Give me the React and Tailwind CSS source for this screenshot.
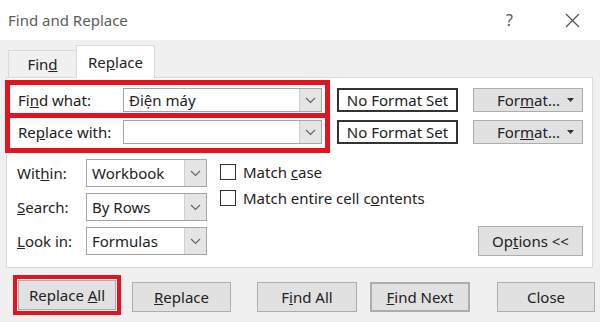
import React from 'react';

function Chevron() {
    return (
        <svg width="11" height="7" viewBox="0 0 11 7">
            <path d="M1 1l4.5 4.5L10 1" fill="none" stroke="#666" strokeWidth="1.2" />
        </svg>
    );
}

function Combo({ value, className }) {
    return (
        <div className={`flex border border-[#a5a5a5] bg-white ${className}`}>
            <div className="flex-1 flex items-center pl-[5px] text-[15px] text-[#222]">{value}</div>
            <div className="w-[22px] bg-[#e5e5e5] border-l border-[#cfcfcf] flex items-center justify-center">
                <Chevron />
            </div>
        </div>
    );
}

function Btn({ children, className }) {
    return (
        <div className={`h-[30px] flex items-center justify-center bg-[#e1e1e1] border border-[#adadad] text-[15px] text-[#222] ${className}`}>
            <span>{children}</span>
        </div>
    );
}

export default function App() {
    return (
        <div className="w-[600px] h-[322px] overflow-hidden font-['Noto_Sans',sans-serif] bg-[#f0f0f0]">
            {/* Title bar */}
            <div className="h-[40px] bg-white flex items-center">
                <span className="ml-[8px] text-[15px] text-[#5c5c5c]">Find and Replace</span>
                <span className="ml-auto mr-[52px] text-[16px] text-[#555]">?</span>
                <svg className="mr-[20px]" width="15" height="15" viewBox="0 0 15 15">
                    <path d="M1 1l13 13M14 1L1 14" stroke="#555" strokeWidth="1.2" />
                </svg>
            </div>

            {/* Tabs */}
            <div className="h-[37px] pl-[8px] flex items-end">
                <div className="w-[68px] h-[27px] border-t border-l border-[#d9d9d9] flex items-center justify-center text-[15px] text-[#222]">
                    <span>Fin<u>d</u></span>
                </div>
                <div className="relative z-10 -mb-px w-[79px] h-[33px] bg-white border border-b-0 border-[#d9d9d9] flex items-center justify-center text-[15px] text-[#222]">
                    <span>Re<u>p</u>lace</span>
                </div>
            </div>

            {/* Panel */}
            <div className="ml-[6px] w-[587px] h-[191px] bg-white border border-[#d9d9d9] pt-[2px]">
                <div className="flex items-start">
                    <div className="-ml-[2px] w-[325px] border-[5px] border-[#e3141f]">
                        <div className="h-[28px] flex items-start pt-[3px]">
                            <div className="w-[113px] h-[24px] pl-[8px] flex items-center text-[15px] text-[#222]">
                                <span>Fi<u>n</u>d what:</span>
                            </div>
                            <Combo value="Điện máy" className="w-[199px] h-[24px]" />
                        </div>
                        <div className="h-[5px] bg-[#e3141f]"></div>
                        <div className="h-[30px] flex items-start pt-[2px]">
                            <div className="w-[113px] h-[24px] pl-[8px] flex items-center text-[15px] text-[#222]">
                                <span>Re<u>p</u>lace with:</span>
                            </div>
                            <Combo value="" className="w-[199px] h-[24px]" />
                        </div>
                    </div>
                    <div className="ml-[7px] mt-[8px] flex flex-col gap-[8px]">
                        {[0, 1].map((i) => (
                            <div key={i} className="flex">
                                <div className="w-[121px] h-[24px] border-2 border-[#333] flex items-center justify-center text-[15px] text-[#222]">
                                    No Format Set
                                </div>
                                <div className="ml-[15px] w-[110px] h-[24px] bg-[#e1e1e1] border border-[#adadad] flex items-center text-[15px] text-[#222]">
                                    <span className="ml-[23px]">For<u>m</u>at...</span>
                                    <svg className="ml-auto mr-[8px]" width="7" height="4" viewBox="0 0 7 4">
                                        <path d="M0 0h7L3.5 4z" fill="#333" />
                                    </svg>
                                </div>
                            </div>
                        ))}
                    </div>
                </div>

                <div className="mt-[6px] pl-[10px] flex items-start">
                    <div className="flex flex-col gap-[6px]">
                        <div className="flex items-center h-[28px]">
                            <div className="w-[69px] text-[15px] text-[#222]">Wit<u>h</u>in:</div>
                            <Combo value="Workbook" className="w-[121px] h-[28px]" />
                        </div>
                        <div className="flex items-center h-[28px]">
                            <div className="w-[69px] text-[15px] text-[#222]"><u>S</u>earch:</div>
                            <Combo value="By Rows" className="w-[121px] h-[28px]" />
                        </div>
                        <div className="flex items-center h-[28px]">
                            <div className="w-[69px] text-[15px] text-[#222]"><u>L</u>ook in:</div>
                            <Combo value="Formulas" className="w-[121px] h-[28px]" />
                        </div>
                    </div>
                    <div className="ml-[13px] flex flex-col">
                        <div className="h-[26px] flex items-center">
                            <div className="w-[16px] h-[16px] border border-[#333] bg-white"></div>
                            <span className="ml-[7px] text-[15px] text-[#222]">Match <u>c</u>ase</span>
                        </div>
                        <div className="h-[26px] flex items-center">
                            <div className="w-[16px] h-[16px] border border-[#333] bg-white"></div>
                            <span className="ml-[7px] text-[15px] text-[#222]">Match entire cell c<u>o</u>ntents</span>
                        </div>
                    </div>
                    <Btn className="ml-auto mr-[9px] mt-[67px] w-[105px] h-[28px]">
                        Op<u>t</u>ions &lt;&lt;
                    </Btn>
                </div>
            </div>

            {/* Bottom buttons */}
            <div className="mt-[7px] flex items-start">
                <div className="ml-[13px] w-[108px] h-[40px] border-[4px] border-[#e3141f] p-px">
                    <Btn className="w-full">Replace <u>A</u>ll</Btn>
                </div>
                <Btn className="ml-[11px] mt-[7px] w-[99px]"><u>R</u>eplace</Btn>
                <Btn className="ml-[26px] mt-[7px] w-[100px]">F<u>i</u>nd All</Btn>
                <Btn className="ml-[13px] mt-[7px] w-[100px] border-2 border-[#0078d7]"><u>F</u>ind Next</Btn>
                <Btn className="ml-[27px] mt-[7px] w-[98px]">Close</Btn>
            </div>
        </div>
    );
}
